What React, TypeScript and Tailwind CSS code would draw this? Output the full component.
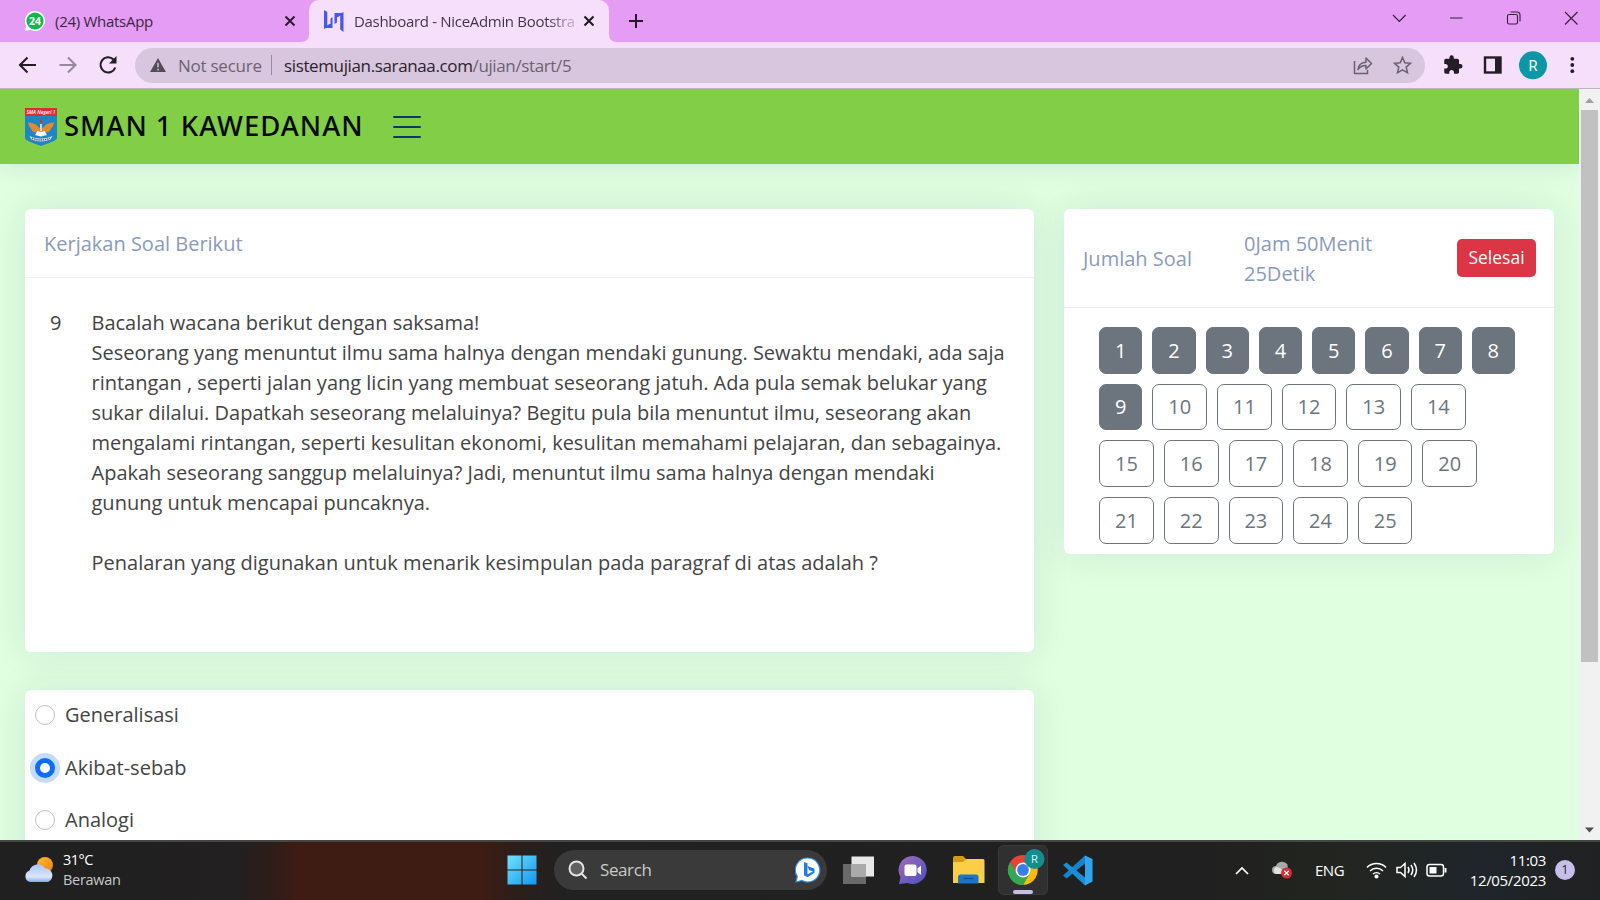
import React from "react";

const segoe = "font-['Open_Sans',sans-serif]";

function TabBar() {
  return (
    <div className="flex h-[42px] shrink-0 items-end bg-[#e59cf4]">
      <div className="flex h-[42px] w-[309px] items-center pl-[25px] pr-[11px]">
        <svg width="20" height="20" viewBox="0 0 20 20">
          <path d="M10 0a10 10 0 1 1-4.8 18.8L0 20l1.3-5A10 10 0 0 1 10 0z" fill="#fff" />
          <circle cx="10" cy="10" r="8.6" fill="#12b84c" />
          <text x="10" y="13.6" textAnchor="middle" fontSize="10.500" fontWeight="700" fill="#fff" fontFamily="Open Sans, sans-serif">24</text>
        </svg>
        <span className="ml-[10px] flex-1 whitespace-nowrap text-[15px] tracking-[-0.28px] text-[#3a2740]">(24) WhatsApp</span>
        <svg width="16" height="16" viewBox="0 0 16 16" stroke="#28182c" strokeWidth="1.9"><path d="M3.5 3.5l9 9M12.500 3.500l-9 9" /></svg>
      </div>
      <div className="relative flex h-[42px] w-[300px] items-center rounded-t-[10px] bg-[#f6dffb] pl-[15px] pr-[12px]">
        <svg className="absolute bottom-0 left-[-8px]" width="8" height="8" viewBox="0 0 8 8"><path d="M8 0v8H0q8 0 8-8z" fill="#f6dffb" /></svg>
        <svg className="absolute bottom-0 right-[-8px]" width="8" height="8" viewBox="0 0 8 8"><path d="M0 0v8h8q-8 0-8-8z" fill="#f6dffb" /></svg>
        <svg width="20" height="22" viewBox="0 0 20 22" fill="#4558e6">
          <path d="M0 0l3.300 2v13.500l2-1.500h1.200V8.500L8.500 7v11H2L0 19z" />
          <path d="M19.500 22l-3.300-2.500V5.500l-2 1.500H13v5.500L10.500 14V3H17.500l2-1z" />
        </svg>
        <span className="ml-[10px] w-[220px] whitespace-nowrap bg-gradient-to-r from-[#3c3440] from-88% to-[#3c344040] bg-clip-text text-[15px] tracking-[-0.310px] text-transparent">Dashboard - NiceAdmin Bootstra</span>
        <svg className="ml-[7px]" width="16" height="16" viewBox="0 0 16 16" stroke="#1f1a22" strokeWidth="2.100"><path d="M3.500 3.500l9 9M12.500 3.500l-9 9" /></svg>
      </div>
      <svg className="mb-[12px] ml-[18px]" width="18" height="18" viewBox="0 0 18 18" stroke="#28182c" strokeWidth="2"><path d="M9 2v14M2 9h14" /></svg>
      <svg className="ml-auto" width="210" height="42" viewBox="1390 0 210 42" fill="none" stroke="#34203a" strokeWidth="1.100">
        <path d="M1393 15l6.300 6.500 6.300-6.500M1450 18h12.500M1565 12l12.500 12.500M1577.500 12L1565 24.500" />
        <rect x="1507.500" y="14.500" width="10" height="9.500" rx="1.500" />
        <path d="M1510.500 12h6.500q3 0 3 3v6.500" />
      </svg>
    </div>
  );
}

function Toolbar() {
  return (
    <div className="flex h-[47px] shrink-0 items-center border-b-[1.500px] border-[#bfb3c2] bg-[#f6dffb]">
      <svg width="135" height="46" viewBox="0 0 135 46" fill="none" stroke="#231d26" strokeWidth="2.100">
        <path d="M36 23H21M27.500 15.500L20 23l7.500 7.500" />
        <path d="M59.500 23h15M68 15.500l7.500 7.500-7.500 7.500" stroke="#96899a" />
        <path d="M113.500 17.500A7.600 7.600 0 1 0 115.300 25.500" />
        <path d="M116.500 14v7.500h-7.500z" fill="#231d26" stroke="none" />
      </svg>
      <div className="flex h-[35px] w-[1290px] items-center rounded-full bg-[#d8c6de] pl-[15px] pr-[12px]">
        <svg width="16" height="14" viewBox="0 0 17 15"><path d="M8.500 0L17 15H0z" fill="#544b58" /><path d="M8.500 5v5M8.500 11.500v1.800" stroke="#d8c6de" strokeWidth="1.500" /></svg>
        <span className="ml-[12px] w-[84px] whitespace-nowrap pt-px text-[17px] tracking-[-0.250px] text-[#6d6370]">Not secure</span>
        <span className="ml-[9px] mr-[12px] h-[20px] w-px bg-[#988c9c]" />
        <span className="whitespace-nowrap pt-px text-[17px] tracking-[-0.370px] text-[#2a232d]">sistemujian.saranaa.com<span className="text-[#6d6370]">/ujian/start/5</span></span>
        <svg className="ml-auto" width="60" height="22" viewBox="1353 54 60 22" fill="none" stroke="#6a606e" strokeWidth="1.500">
          <path d="M1354.500 61v12.500h13V70" />
          <path d="M1358 69.500c.5-5 4-7 8-7.200V58l5.500 5.500-5.500 5.500v-3.500c-3.500 0-6 1-8 4z" strokeLinejoin="round" />
          <path d="M1402.500 57.500l2.300 5.300 5.700.5-4.300 3.800 1.300 5.700-5-3-5 3 1.300-5.700-4.300-3.800 5.700-.5z" />
        </svg>
      </div>
      <svg className="ml-auto" width="164" height="46" viewBox="1436 42 164 46">
        <path transform="translate(1442.500 54.500) scale(.87)" d="M20.500 11H19V7c0-1.100-.9-2-2-2h-4V3.500a2.500 2.500 0 0 0-5 0V5H4c-1.100 0-1.990.9-1.990 2v3.800H3.500c1.490 0 2.700 1.210 2.700 2.700s-1.210 2.700-2.700 2.700H2V20c0 1.100.9 2 2 2h3.800v-1.500c0-1.490 1.210-2.700 2.700-2.700 1.490 0 2.700 1.210 2.700 2.700V22H17c1.100 0 2-.9 2-2v-4h1.500a2.500 2.500 0 0 0 0-5z" fill="#231d26" />
        <rect x="1485" y="57.500" width="15.500" height="15" fill="none" stroke="#231d26" strokeWidth="2.400" />
        <rect x="1495" y="57" width="6" height="16" fill="#231d26" />
        <circle cx="1533" cy="65.300" r="14" fill="#0c97a7" />
        <text x="1533" y="70.600" textAnchor="middle" fontSize="14.500" fill="#fff" fontFamily="Roboto, sans-serif">R</text>
        <g fill="#231d26"><circle cx="1572.300" cy="58.800" r="1.900" /><circle cx="1572.300" cy="65" r="1.900" /><circle cx="1572.300" cy="71.200" r="1.900" /></g>
      </svg>
    </div>
  );
}

function SchoolCrest() {
  return (
    <svg width="32" height="38" viewBox="0 0 32 38">
      <path d="M0 0h32v30c0 3-9 5-16 8C9 35 0 33 0 30z" fill="#1f86c4" />
      <path d="M0 0h32v8H0z" fill="#e02a35" />
      <text x="16" y="5.700" textAnchor="middle" fontSize="4.800" fontWeight="600" fontStyle="italic" fill="#fff" fontFamily="Open Sans, sans-serif">SMA Negeri 1</text>
      <path d="M3 14.500c4 0 7 1 10 4l3 3 3-3c3-3 6-4 10-4-1 3-1 5-3 6-1 3-3 4-6 4h-8c-3 0-5-1-6-4-2-1-2-3-3-6z" fill="#e58a2b" />
      <path d="M16 10l1.300 3.500-1.300 3-1.300-3z" fill="#c9382c" />
      <path d="M15.200 16h1.600v7h-1.600z" fill="#f4ece6" />
      <path d="M10 27l2.500-4 3.500 1 3.500-1 2.500 4-6 1.500z" fill="#fff" />
      <path d="M4.500 28Q16 33 27.500 28l-2 3.500Q16 35.500 6.500 31.500z" fill="#cfdfe6" />
      <path d="M7 30.200Q16 33.800 25 30.200" fill="none" stroke="#4d5f6c" strokeWidth="1.300" strokeDasharray="1.400 .8" />
    </svg>
  );
}

function SiteHeader() {
  return (
    <header className="flex h-[75px] shrink-0 items-center bg-[#83ce47] pl-[25px] shadow-[0_2px_25px_rgba(1,41,112,0.1)]">
      <SchoolCrest />
      <span className="relative top-[-1px] ml-[7px] w-[299px] whitespace-nowrap font-['Noto_Sans',sans-serif] text-[27.500px] font-medium leading-[36px] tracking-[1px] text-[#050a03]">SMAN 1 KAWEDANAN</span>
      <svg className="ml-[30px]" width="28" height="26" viewBox="0 0 28 26" stroke="#0b3a66" strokeWidth="2" strokeLinecap="round"><path d="M1 3h26M1 13h26M1 23h26" /></svg>
    </header>
  );
}

const questions = Array.from({ length: 25 }, (_, i) => i + 1);

const passage = [
  "Bacalah wacana berikut dengan saksama!",
  "Seseorang yang menuntut ilmu sama halnya dengan mendaki gunung. Sewaktu mendaki, ada saja",
  "rintangan , seperti jalan yang licin yang membuat seseorang jatuh. Ada pula semak belukar yang",
  "sukar dilalui. Dapatkah seseorang melaluinya? Begitu pula bila menuntut ilmu, seseorang akan",
  "mengalami rintangan, seperti kesulitan ekonomi, kesulitan memahami pelajaran, dan sebagainya.",
  "Apakah seseorang sanggup melaluinya? Jadi, menuntut ilmu sama halnya dengan mendaki",
  "gunung untuk mencapai puncaknya.",
];

const cardStyle = "rounded-[6px] bg-white shadow-[0_0_37px_rgba(1,41,112,0.1)]";

function QuestionCard() {
  return (
    <section className={`h-[443px] ${cardStyle}`}>
      <h2 className="border-b border-[#f0f2f6] px-[19px] pb-[18px] pt-[20px] text-[20px] leading-[30px] text-[#899bbd]">Kerjakan Soal Berikut</h2>
      <div className="flex pt-[30px] text-[20px] leading-[30px] text-[#444]">
        <span className="w-[66.500px] pl-[25px]">9</span>
        <div className="whitespace-nowrap">
          {passage.map((line) => <p key={line}>{line}</p>)}
          <p className="mt-[30px]">Penalaran yang digunakan untuk menarik kesimpulan pada paragraf di atas adalah ?</p>
        </div>
      </div>
    </section>
  );
}

function Option({ label, checked }: { label: string; checked?: boolean }) {
  return (
    <label className="flex h-[30px] items-center text-[20px] leading-[30px] text-[#444]">
      {checked ? (
        <span className="flex size-[20px] items-center justify-center rounded-full bg-[#0d6efd] shadow-[0_0_0_5px_rgba(13,110,253,0.25)]"><span className="size-[10px] rounded-full bg-white" /></span>
      ) : (
        <span className="size-[20px] rounded-full border border-[#bfbfbf] bg-white" />
      )}
      <span className="ml-[10px]">{label}</span>
    </label>
  );
}

function NavigatorCard() {
  return (
    <section className={`h-[345px] w-[490px] shrink-0 ${cardStyle}`}>
      <div className="flex h-[98.500px] items-center border-b border-[#ebeef4] pl-[19px] pr-[18px] text-[20px] leading-[30px] text-[#899bbd]">
        <span className="w-[161px] pt-[2px]">Jumlah Soal</span>
        <span className="w-[160px] pt-[2px]">0Jam 50Menit 25Detik</span>
        <button className="ml-auto h-[38px] w-[79px] rounded-[5px] bg-[#dc3545] pb-px text-[17.500px] leading-[26px] text-white">Selesai</button>
      </div>
      <div className="ml-[35.200px] mt-[19.500px] flex w-[425px] flex-wrap gap-[10px]">
        {questions.map((n) => (
          <button key={n} className={`h-[46.670px] rounded-[7px] border border-[#6c757d] px-[14.900px] pt-px text-[20px] leading-[30px] ${n < 10 ? "bg-[#6c757d] text-white" : "bg-white text-[#6c757d]"}`}>{n}</button>
        ))}
      </div>
    </section>
  );
}

function Scrollbar() {
  return (
    <div className="flex w-[21px] shrink-0 flex-col items-center bg-[#f1f1f1]">
      <svg width="21" height="21" viewBox="0 0 21 21"><path d="M6 14l4.500-5 4.500 5z" fill="#a0a0a0" /></svg>
      <div className="h-[552px] w-[17px] bg-[#c1c1c1]" />
      <svg className="mt-auto" width="21" height="21" viewBox="0 0 21 21"><path d="M6 8.500l4.500 5 4.500-5z" fill="#505050" /></svg>
    </div>
  );
}

function ChromeIcon() {
  return (
    <svg width="50" height="50" viewBox="0 0 50 50">
      <rect x=".5" y=".5" width="49" height="49" rx="5" fill="#303030" stroke="#3a3a3a" />
      <g transform="translate(25 25)">
        <path d="M0 0L-13 -7.500A15 15 0 0 1 13 -7.500z" fill="#ea4335" />
        <path d="M0 0L-13 -7.500A15 15 0 0 0 0 15z" fill="#34a853" />
        <path d="M0 -7H13A15 15 0 0 1 0 15L6.200 3.500z" fill="#fbbc04" />
        <path d="M0 -7.500H13.500L0 0zM-13 -7.500L-6.500 3.500 0 0z" fill="#ea4335" />
        <path d="M-13 -7.500L-6.500 3.700 0 7.500 6.500 3.700 0 15A15 15 0 0 1 -13 -7.500z" fill="#34a853" />
        <circle r="7.500" fill="#fff" /><circle r="5.900" fill="#3b7ded" />
      </g>
      <circle cx="36.500" cy="14" r="10" fill="#128d92" />
      <text x="36.500" y="18" textAnchor="middle" fontSize="11" fill="#cdeeed" fontFamily="Roboto, sans-serif">R</text>
      <rect x="15" y="45" width="20" height="4" rx="2" fill="#c5bfe8" />
    </svg>
  );
}

function Taskbar() {
  return (
    <div className="flex h-[60px] shrink-0 items-center border-t-2 border-[#454542] bg-[linear-gradient(90deg,#202020_0px,#222020_240px,#2c1d1a_270px,#3f1c13_300px,#3f1c13_480px,#2c1e1b_515px,#212121_560px,#202020_1200px,#22251f_1330px,#1f252a_1480px,#202122_1600px)] pb-[2px] text-white">
      <svg className="ml-[24px]" width="31" height="28" viewBox="0 0 31 28">
        <defs>
          <linearGradient id="sun" x1="0" y1="0" x2="1" y2="1"><stop stopColor="#fbbd2c" /><stop offset="1" stopColor="#f07c13" /></linearGradient>
          <linearGradient id="cloud" x1="0" y1="0" x2="0" y2="1"><stop stopColor="#a9c4f5" /><stop offset=".7" stopColor="#dbe6fb" /><stop offset="1" stopColor="#86a9ea" /></linearGradient>
        </defs>
        <circle cx="21" cy="9" r="8" fill="url(#sun)" />
        <path d="M6 26a6 6 0 0 1-.5-11.500A8.500 8.500 0 0 1 21 12.500 7 7 0 0 1 24 26z" fill="url(#cloud)" />
      </svg>
      <div className="ml-[8px] w-[100px] text-[14.500px] leading-[20px]"><div className="tracking-[-0.500px]">31°C</div><div className="tracking-[-0.300px] text-[#c8c8c8]">Berawan</div></div>
      <svg className="ml-[344px]" width="30" height="30" viewBox="0 0 30 30">
        <defs><linearGradient id="win" x1="0" y1="0" x2="1" y2="1"><stop stopColor="#6fe3fb" /><stop offset="1" stopColor="#1097f2" /></linearGradient></defs>
        <path d="M.5.500h14v14H.5zM15.500.500h14v14h-14zM.5 15.500h14v14H.5zM15.500 15.500h14v14h-14z" fill="url(#win)" />
      </svg>
      <div className="ml-[17px] flex h-[40px] w-[273px] items-center rounded-full bg-[#3a3a3b] pl-[14px] pr-[6px]">
        <svg width="20" height="20" viewBox="0 0 20 20" fill="#606060" stroke="#e4e4e4" strokeWidth="2"><circle cx="8.500" cy="8.500" r="7" /><path d="M13.500 13.500l5 5" /></svg>
        <span className="ml-[12px] text-[17px] tracking-[-0.400px] text-[#cacaca]">Search</span>
        <svg className="ml-auto" width="26" height="26" viewBox="0 0 26 26">
          <path d="M13 1a12 12 0 1 1-6 22.500L1 25l1.300-5.500A12 12 0 0 1 13 1z" fill="#fff" stroke="#2c8fe8" strokeWidth="1.200" />
          <path d="M9 5l3.500 1.200v11L18 14.500l-4-1.500-1.500-4 7 2.700v4l-7 4.500L9 18.300z" fill="#1b7ee0" />
        </svg>
      </div>
      <svg className="ml-[16px]" width="32" height="29" viewBox="0 0 32 29">
        <path d="M0 8h23v20H0z" fill="#696969" /><path d="M8.500.500H31v20H8.500z" fill="#e8e8e8" /><path d="M8.500 8H23v12.500H8.500z" fill="#aaa" />
      </svg>
      <svg className="ml-[23px]" width="30" height="30" viewBox="0 0 30 30">
        <defs><linearGradient id="chat" x1="0" y1="0" x2="1" y2="1"><stop stopColor="#a06cb8" /><stop offset="1" stopColor="#4a50c4" /></linearGradient></defs>
        <path d="M15 1a14 14 0 1 1-5.500 27L1 29l1.500-7A14 14 0 0 1 15 1z" fill="url(#chat)" />
        <rect x="6.500" y="9.500" width="12" height="11.500" rx="2" fill="#fff" /><path d="M19.500 13.500l3.500-3v9.500l-3.500-3z" fill="#fff" />
      </svg>
      <svg className="ml-[25px]" width="32" height="28" viewBox="0 0 32 28">
        <path d="M0 2q0-2 2-2h8l3 3v8H0z" fill="#d39a12" /><path d="M0 6h10l3.500-3H30q1.500 0 1.500 1.500V27H0z" fill="#fcce47" />
        <path d="M5 27.500V21q0-2.500 2.500-2.500H23q2.500 0 2.500 2.500v6.500z" fill="#1976c8" /><path d="M10.500 22.500h10" stroke="#0e4e8e" strokeWidth="1.200" />
      </svg>
      <span className="ml-[13px]"><ChromeIcon /></span>
      <svg className="ml-[14px]" width="32" height="31" viewBox="0 0 32 31">
        <path d="M23 .5L30.500 4v22.500L23 30.500z" fill="#2fa7f0" />
        <path d="M23 .500v8L4.500 23.500 1 20.500z" fill="#1684cc" /><path d="M23 30.500v-8L4.500 7.500 1 10z" fill="#1a8fd9" />
      </svg>
      <svg className="ml-[141px]" width="14" height="9" viewBox="0 0 14 9" fill="none" stroke="#fff" strokeWidth="1.700"><path d="M1 8l6-6 6 6" /></svg>
      <svg className="ml-[23px]" width="21" height="18" viewBox="0 0 21 18">
        <path d="M4 13a4 4 0 0 1 0-8 6.500 6.500 0 0 1 11.500-1.500L16 13z" fill="#a8a8a8" /><path d="M4 13a4 4 0 0 1 0-7q6 0 8 7z" fill="#e2e2e2" />
        <circle cx="14.500" cy="12" r="5.500" fill="#d92b33" /><path d="M12.300 9.800l4.400 4.400M16.700 9.800l-4.400 4.400" stroke="#fff" strokeWidth="1.300" />
      </svg>
      <span className="ml-[22px] w-[29px] text-[15px] tracking-[-0.500px]">ENG</span>
      <svg className="ml-[22px]" width="82" height="20" viewBox="0 0 82 20" fill="none" stroke="#fff" strokeWidth="1.500">
        <path d="M1 7.500a13.500 13.500 0 0 1 19 0M4 11a9.300 9.300 0 0 1 13 0M7 14a5.200 5.200 0 0 1 7 0" /><circle cx="10.500" cy="16.500" r="1.300" fill="#fff" />
        <path d="M31 7.500h3.500L39 3.500v13l-4.500-4H31zM42 7q2 3 0 6M45 5q3.500 5 0 10M48 3q5 7 0 14" />
        <rect x="61" y="4.500" width="16.500" height="11.500" rx="2.500" /><rect x="63.500" y="7" width="7" height="6.500" fill="#fff" stroke="none" /><path d="M79.500 8v4.500" strokeWidth="2" />
      </svg>
      <div className="ml-auto mr-[9px] text-right text-[15px] leading-[20px] tracking-[-0.330px]"><div>11:03</div><div>12/05/2023</div></div>
      <span className="mr-[25px] flex size-[20px] items-center justify-center rounded-full bg-[#c7bfe9] text-[12px] text-[#222]">1</span>
    </div>
  );
}

export default function App() {
  return (
    <div className={`flex h-[900px] w-[1600px] flex-col overflow-hidden ${segoe}`}>
      <TabBar />
      <Toolbar />
      <div className="flex min-h-0 flex-1">
        <div className="flex min-w-0 flex-1 flex-col overflow-hidden bg-[#e0ffe0]">
          <SiteHeader />
          <main className="flex items-start gap-[30px] pl-[25px] pt-[45px]">
            <div className="flex w-[1009px] flex-col gap-[38px]">
              <QuestionCard />
              <section className={`flex h-[300px] flex-col gap-[22.500px] pl-[10px] pt-[10.400px] ${cardStyle}`}>
                <Option label="Generalisasi" />
                <Option label="Akibat-sebab" checked />
                <Option label="Analogi" />
              </section>
            </div>
            <NavigatorCard />
          </main>
        </div>
        <Scrollbar />
      </div>
      <Taskbar />
    </div>
  );
}
